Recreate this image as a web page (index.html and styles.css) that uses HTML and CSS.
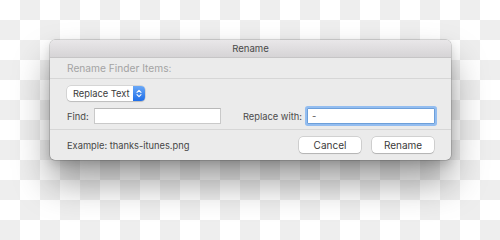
FILE: index.html
```html
<!DOCTYPE html>
<html lang="en">
<head>
    <meta charset="UTF-8">
    <title>Rename</title>
    <link rel="stylesheet" href="styles.css">
</head>
<body>

<div class="stage">
    <div class="dialog">
        <div class="titlebar">Rename</div>

        <div class="section head">Rename Finder Items:</div>

        <div class="section options">
            <div class="popup">
                <span class="popup-label">Replace Text</span>
                <span class="popup-cap">
                    <svg width="6" height="9" viewBox="0 0 6 9">
                        <path d="M1 3.4 L3 1.4 L5 3.4 M1 5.6 L3 7.6 L5 5.6" fill="none" stroke="#fff" stroke-width="1.1" stroke-linecap="round" stroke-linejoin="round"/>
                    </svg>
                </span>
            </div>

            <div class="fields">
                <div class="field-group find">
                    <span class="label">Find:</span>
                    <div class="text-field"></div>
                </div>
                <div class="field-group replace">
                    <span class="label">Replace with:</span>
                    <div class="text-field focused">-</div>
                </div>
            </div>
        </div>

        <div class="section footer">
            <span class="example">Example: thanks-itunes.png</span>
            <div class="buttons">
                <button class="btn">Cancel</button>
                <button class="btn">Rename</button>
            </div>
        </div>
    </div>
</div>

</body>
</html>
```

FILE: styles.css
```css
body {
    margin: 0;
    width: 500px;
    height: 240px;
    overflow: hidden;
    font-family: 'Inter', 'Noto Sans', sans-serif;
    font-size: 9.3px;
    color: #3c3c3c;
    /* шахматка прозрачности */
    background: repeating-conic-gradient(#eeeeee 0 25%, #ffffff 0 50%) 0 0 / 40px 40px;
}

.stage {
    padding: 40px 0 0 50px;
}

.dialog {
    width: 401px;
    height: 120px;
    box-sizing: border-box;
    background-color: #ebebeb;
    border-radius: 5px;
    box-shadow: 0 0 0 0.5px rgba(0, 0, 0, 0.25), 0 22px 36px rgba(0, 0, 0, 0.38), 0 4px 10px rgba(0, 0, 0, 0.14);
    overflow: hidden;
    white-space: nowrap;
}

.titlebar {
    height: 17px;
    line-height: 18px;
    text-align: center;
    color: #4a4a4a;
    font-size: 9.6px;
    background: linear-gradient(#e9e7e9, #d6d4d6);
    border-bottom: 1px solid #c6c5c6;
}

.section {
    padding: 0 16px 0 17px;
    border-bottom: 1px solid #d6d6d6;
}

.head {
    height: 20px;
    line-height: 21px;
    color: #a3a3a3;
    font-size: 10.2px;
}

.options {
    height: 51px;
    padding-top: 7px;
    box-sizing: border-box;
}

.popup {
    display: flex;
    width: 78px;
    height: 15px;
    box-sizing: border-box;
    border-radius: 4px;
    background-color: #fff;
    box-shadow: 0 0 0 0.5px rgba(0, 0, 0, 0.18), 0 1px 1px rgba(0, 0, 0, 0.12);
    overflow: hidden;
}

.popup-label {
    flex: 1;
    padding-left: 6px;
    line-height: 15px;
    color: #3a3a3a;
}

.popup-cap {
    width: 12px;
    display: flex;
    align-items: center;
    justify-content: center;
    background: linear-gradient(#6aa8f7, #1f6ee8);
}

.fields {
    display: flex;
    gap: 22px;
    margin-top: 7px;
}

.field-group {
    display: flex;
    align-items: center;
}

.label {
    color: #4a4a4a;
}

.find .label {
    width: 27px;
}

.replace .label {
    width: 64px;
}

.text-field {
    width: 127px;
    height: 16px;
    box-sizing: border-box;
    background-color: #fff;
    border: 1px solid #c9c9c9;
    border-top-color: #b8b8b8;
    padding-left: 4px;
    line-height: 14px;
    color: #555;
}

.text-field.focused {
    width: 128px;
    border-color: #6d9fd9;
    box-shadow: 0 0 0 2px #93bdf0;
    border-radius: 1px;
}

.footer {
    height: 30px;
    border-bottom: none;
    display: flex;
    align-items: center;
    justify-content: space-between;
    padding-right: 17px;
}

.example {
    color: #464646;
}

.buttons {
    display: flex;
    gap: 11px;
}

.btn {
    width: 62px;
    height: 16px;
    padding: 0;
    border: none;
    border-radius: 4px;
    background-color: #fff;
    box-shadow: 0 0 0 0.5px rgba(0, 0, 0, 0.22), 0 1px 1px rgba(0, 0, 0, 0.14);
    font-family: inherit;
    font-size: 10px;
    color: #3a3a3a;
}
```
